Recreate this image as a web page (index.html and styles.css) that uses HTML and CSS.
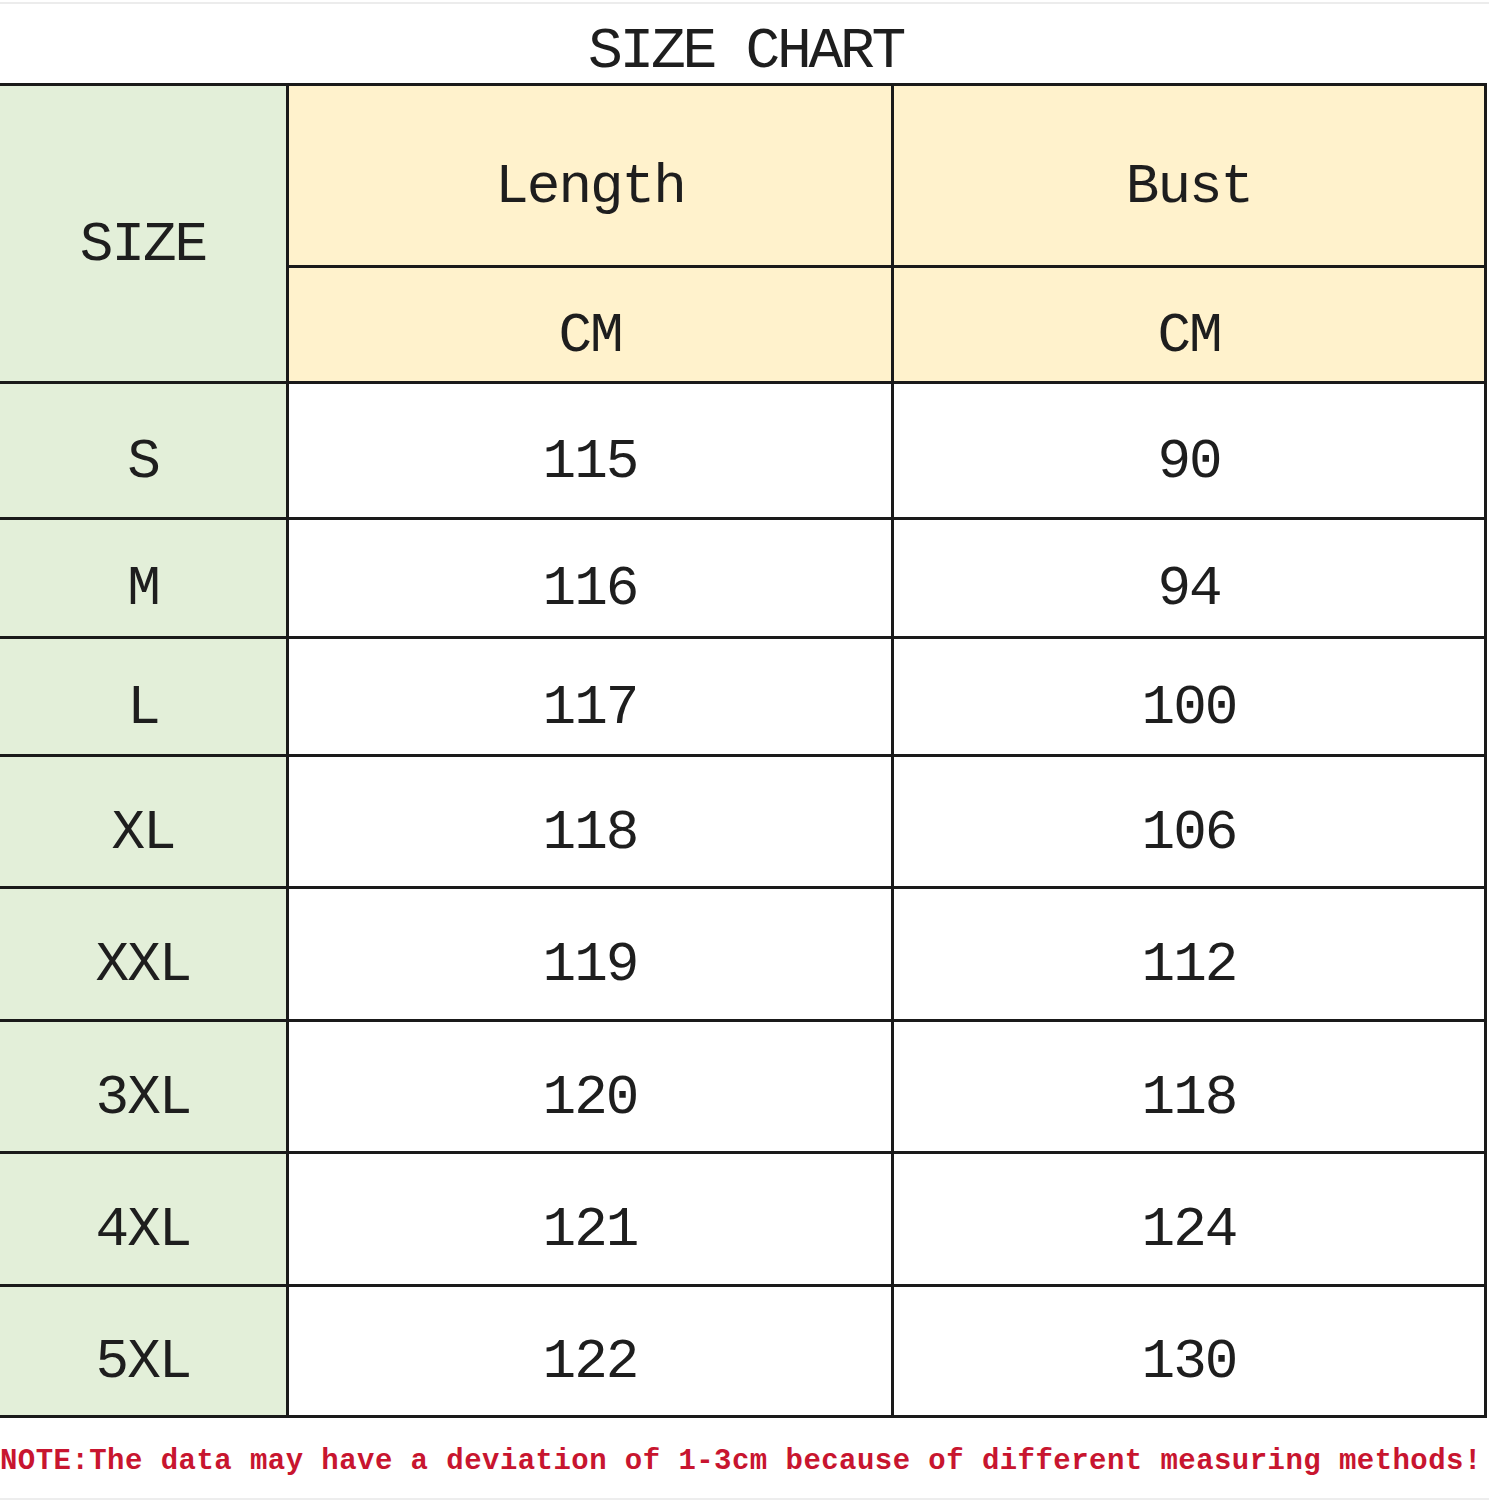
FILE: index.html
```html
<!DOCTYPE html>
<html lang="en">
<head>
<meta charset="utf-8">
<title>Size Chart</title>
<link rel="stylesheet" href="styles.css">
</head>
<body>
<div class="page">
  <div class="title-bar">
    <h1 class="title">SIZE CHART</h1>
  </div>
  <div class="chart">
    <div class="cell green size-head">SIZE</div>
    <div class="cell yellow">Length</div>
    <div class="cell yellow">Bust</div>
    <div class="cell yellow">CM</div>
    <div class="cell yellow">CM</div>

    <div class="cell green">S</div><div class="cell">115</div><div class="cell">90</div>
    <div class="cell green">M</div><div class="cell">116</div><div class="cell">94</div>
    <div class="cell green">L</div><div class="cell">117</div><div class="cell">100</div>
    <div class="cell green">XL</div><div class="cell">118</div><div class="cell">106</div>
    <div class="cell green">XXL</div><div class="cell">119</div><div class="cell">112</div>
    <div class="cell green">3XL</div><div class="cell">120</div><div class="cell">118</div>
    <div class="cell green">4XL</div><div class="cell">121</div><div class="cell">124</div>
    <div class="cell green">5XL</div><div class="cell">122</div><div class="cell">130</div>
  </div>
  <p class="note">NOTE:The data may have a deviation of 1-3cm because of different measuring methods!</p>
</div>
</body>
</html>
```
FILE: styles.css
```css
html, body {
  margin: 0;
  padding: 0;
  background: #ffffff;
}

.page {
  width: 1489px;
  height: 1500px;
  font-family: "Liberation Mono", "DejaVu Sans Mono", monospace;
  color: #1e1e1e;
  box-sizing: border-box;
  border-top: 2px solid #ffffff;
}

.title-bar {
  height: 81px;
  box-sizing: border-box;
  border-top: 2px solid #ececec;
  display: flex;
  align-items: center;
  justify-content: center;
  padding-top: 16px;
  padding-left: 2px;
}

.title {
  margin: 0;
  font-weight: normal;
  font-size: 58px;
  letter-spacing: -3.3px;
  line-height: 1;
}

.chart {
  display: grid;
  grid-template-columns: 289px 605px 593px;
  grid-template-rows: 182px 116px 136px 119px 118px 132px 133px 132px 133px 131px;
  border-top: 3px solid #1a1a1a;
  width: 1487px;
}

.cell {
  box-sizing: border-box;
  border-right: 3px solid #1a1a1a;
  border-bottom: 3px solid #1a1a1a;
  display: flex;
  align-items: center;
  justify-content: center;
  padding-top: 22px;
  font-size: 56px;
  letter-spacing: -2px;
  line-height: 1;
  background: #ffffff;
}

.green {
  background: #e3efd9;
}

.yellow {
  background: #fff2cc;
}

.size-head {
  grid-row: span 2;
}

.note {
  margin: 0;
  height: 82px;
  box-sizing: border-box;
  border-bottom: 2px solid #ededed;
  display: flex;
  align-items: center;
  padding-top: 6px;
  font-family: "Liberation Mono", "DejaVu Sans Mono", monospace;
  font-weight: bold;
  font-size: 29px;
  letter-spacing: 0.45px;
  color: #c8152f;
  white-space: nowrap;
}
```
